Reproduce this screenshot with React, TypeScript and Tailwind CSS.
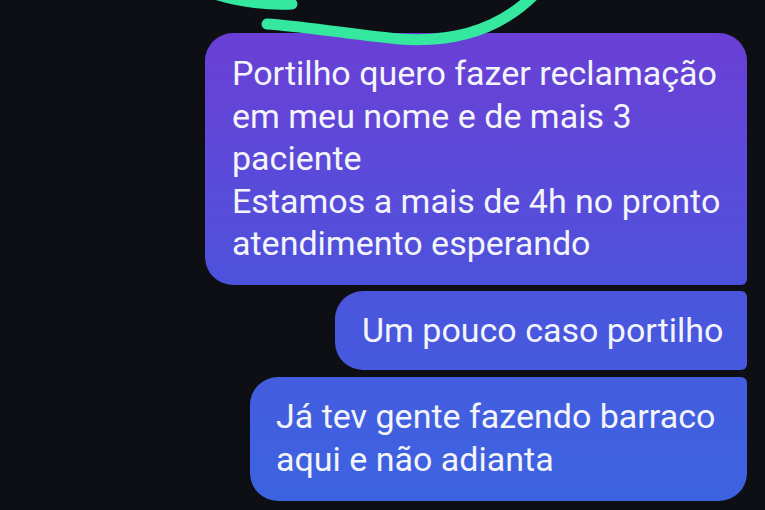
import React from 'react';

const bubbleText = "font-['Roboto',sans-serif] text-[34px] text-[#f4f4fb] whitespace-nowrap";

export default function App() {
  return (
    <div className="relative w-[765px] h-[510px] overflow-hidden bg-[#0d0f14]">
      {/* Marker scribble */}
      <svg className="absolute left-0 top-0 z-10" width="765" height="60" viewBox="0 0 765 60" fill="none">
        <path d="M215 -6 C240 2 265 5 292 4" stroke="#34e8a0" strokeWidth="11" strokeLinecap="round" />
        <path d="M267 24 C300 26 340 33 400 39 C455 43 500 28 533 -4" stroke="#34e8a0" strokeWidth="11" strokeLinecap="round" />
      </svg>

      <div className="flex flex-col items-end pt-[33px] pr-[18px]">
        <div className={`w-[542px] rounded-[28px] rounded-br-[6px] bg-gradient-to-b from-[#6a3fd6] to-[#4c52dc] pl-[27px] pt-[19px] pb-[20px] leading-[42.5px] ${bubbleText}`}>
          Portilho quero fazer reclamação
          <br />
          em meu nome e de mais 3
          <br />
          paciente
          <br />
          Estamos a mais de 4h no pronto
          <br />
          atendimento esperando
        </div>

        <div className={`mt-[6px] w-[412px] rounded-[28px] rounded-tr-[6px] rounded-br-[6px] bg-gradient-to-b from-[#4a55dc] to-[#465adf] pl-[27px] pt-[18px] pb-[19px] leading-[42.5px] ${bubbleText}`}>
          Um pouco caso portilho
        </div>

        <div className={`mt-[7px] w-[497px] rounded-[28px] rounded-tr-[6px] bg-gradient-to-b from-[#435ddf] to-[#3c63e1] pl-[26px] pt-[18px] pb-[20px] leading-[43px] ${bubbleText}`}>
          Já tev gente fazendo barraco
          <br />
          aqui e não adianta
        </div>
      </div>
    </div>
  );
}
